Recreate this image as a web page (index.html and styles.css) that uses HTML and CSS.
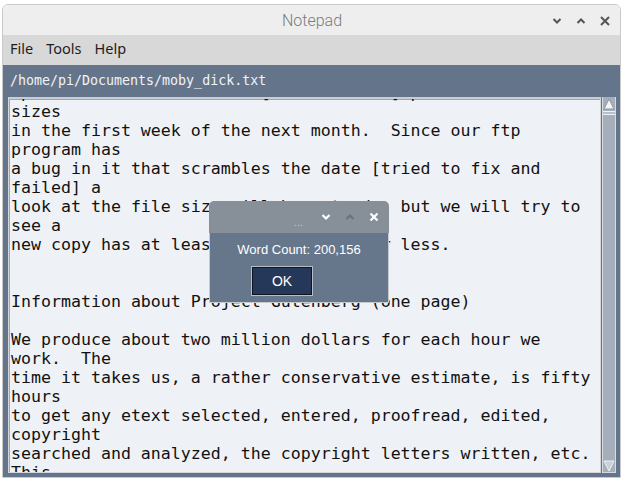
FILE: index.html
```html
<!DOCTYPE html>
<html>
<head>
<meta charset="utf-8">
<link rel="stylesheet" href="styles.css">
</head>
<body>
<div class="window">
  <div class="titlebar">
    <span></span>
    <span class="title">Notepad</span>
    <div class="controls">
      <svg width="10" height="10" viewBox="0 0 10 10"><polyline points="1.5,3 5,6.5 8.5,3" fill="none" stroke="#555" stroke-width="2"/></svg>
      <svg width="10" height="10" viewBox="0 0 10 10"><polyline points="1.5,7 5,3.5 8.5,7" fill="none" stroke="#555" stroke-width="2"/></svg>
      <svg width="10" height="10" viewBox="0 0 10 10"><path d="M1,1 L9,9 M9,1 L1,9" fill="none" stroke="#555" stroke-width="2"/></svg>
    </div>
  </div>
  <div class="menubar">
    <span>File</span><span>Tools</span><span>Help</span>
  </div>
  <div class="main">
    <div class="path">/home/pi/Documents/moby_dick.txt</div>
    <div class="editor">
      <div class="text"><pre>up to date first edition [xxxxx10x.xxx] please check file
sizes
in the first week of the next month.  Since our ftp
program has
a bug in it that scrambles the date [tried to fix and
failed] a
look at the file size will have to do, but we will try to
see a
new copy has at least one byte more or less.


Information about Project Gutenberg (one page)

We produce about two million dollars for each hour we
work.  The
time it takes us, a rather conservative estimate, is fifty
hours
to get any etext selected, entered, proofread, edited,
copyright
searched and analyzed, the copyright letters written, etc.
This
</pre></div>
      <div class="scrollbar">
        <svg class="arrow" width="12" height="12" viewBox="0 0 12 12"><polygon points="6,1 11,11 1,11" fill="#f2f4f7" stroke="#8d97a3" stroke-width="1"/></svg>
        <div class="thumb"></div>
        <div class="trough"></div>
        <svg class="arrow" width="12" height="12" viewBox="0 0 12 12"><polygon points="1,1 11,1 6,11" fill="#c9d0d8" stroke="#eef1f5" stroke-width="1"/></svg>
      </div>
    </div>
  </div>
</div>

<div class="dialog">
  <div class="dlg-title">
    <span class="dots">...</span>
    <svg width="10" height="10" viewBox="0 0 10 10"><polyline points="1.5,3 5,6.5 8.5,3" fill="none" stroke="#ffffff" stroke-width="2.2"/></svg>
    <svg width="10" height="10" viewBox="0 0 10 10"><polyline points="1.5,7 5,3.5 8.5,7" fill="none" stroke="#6a727d" stroke-width="2.2"/></svg>
    <svg width="10" height="10" viewBox="0 0 10 10"><path d="M1.5,1.5 L8.5,8.5 M8.5,1.5 L1.5,8.5" fill="none" stroke="#ffffff" stroke-width="2.2"/></svg>
  </div>
  <div class="dlg-body">
    <div class="msg">Word Count: 200,156</div>
    <button class="ok">OK</button>
  </div>
</div>
</body>
</html>
```

FILE: styles.css
```css
html, body {
  margin: 0;
  padding: 0;
  background: #ffffff;
}
body {
  padding: 4px 0 0 2px;
  width: 628px;
  height: 483px;
  box-sizing: border-box;
  overflow: hidden;
  position: relative;
}
.window {
  width: 619px;
  box-sizing: border-box;
  border: 1px solid #c9c9c9;
  border-radius: 6px 6px 0 0;
  overflow: hidden;
  display: flex;
  flex-direction: column;
}
.titlebar {
  height: 30px;
  background: #eeeeee;
  display: grid;
  grid-template-columns: 1fr auto 1fr;
  align-items: center;
}
.title {
  font-family: Roboto, "Noto Sans", sans-serif;
  font-size: 16px;
  color: #7b7b7b;
  font-weight: 300;
  padding-left: 1px;
}
.controls {
  display: flex;
  justify-content: flex-end;
  gap: 14px;
  padding-right: 10px;
  padding-top: 1px;
}
.controls svg { display: block; }
.menubar {
  height: 30px;
  box-sizing: border-box;
  padding-bottom: 4px;
  background: #d8d8d8;
  display: flex;
  align-items: center;
  gap: 13px;
  padding-left: 7px;
  font-family: "Noto Sans", sans-serif;
  font-size: 14.5px;
  color: #1e1e1e;
}
.main {
  background: #64758b;
  padding: 0 4px 4px 5px;
  display: flex;
  flex-direction: column;
}
.path {
  height: 32px;
  box-sizing: border-box;
  padding-bottom: 1px;
  display: flex;
  align-items: center;
  padding-left: 2px;
  font-family: "DejaVu Sans Mono", monospace;
  font-size: 13.3px;
  color: #f1f3f5;
}
.editor {
  height: 376px;
  display: flex;
}
.text {
  width: 594px;
  box-sizing: border-box;
  border: 1px solid #d3d7dc;
  border-top: 2px solid #c9ced5;
  box-shadow: inset 1px 1px 0 #9ea6b0;
  background: #eef1f6;
  overflow: hidden;
  padding-left: 2px;
}
.text pre {
  margin: -16px 0 0 0;
  font-family: "DejaVu Sans Mono", monospace;
  font-size: 16.6px;
  line-height: 19px;
  color: #111111;
}
.scrollbar {
  width: 14px;
  margin-left: 1px;
  box-sizing: border-box;
  background: #a5afbc;
  border-left: 1px solid #d6dbe1;
  border-right: 1px solid #d6dbe1;
  border-bottom: 1px solid #d6dbe1;
  display: flex;
  flex-direction: column;
  align-items: center;
  padding-top: 1px;
}
.scrollbar .arrow { display: block; flex: none; }
.thumb {
  width: 12px;
  height: 4px;
  margin-top: 1px;
  box-sizing: border-box;
  border-top: 1px solid #eef1f5;
  border-bottom: 1px solid #eef1f5;
  background: #b6bfca;
}
.trough { flex: 1; }

.dialog {
  position: absolute;
  left: 209px;
  top: 201px;
  width: 180px;
}
.dlg-title {
  height: 32px;
  background: #878f99;
  border-radius: 5px 5px 0 0;
  display: flex;
  align-items: center;
  justify-content: flex-end;
  gap: 14px;
  padding-right: 10px;
}
.dlg-title svg { display: block; }
.dots {
  font-family: "Liberation Sans", sans-serif;
  font-size: 11px;
  color: #c3c8ce;
  padding-top: 9px;
  margin-right: 4px;
}
.dlg-body {
  height: 70px;
  box-sizing: border-box;
  background: #66768b;
  border: 1px solid #c6c9ce;
  border-top: none;
  padding-top: 9px;
}
.msg {
  text-align: center;
  font-family: "Liberation Sans", sans-serif;
  font-size: 13px;
  line-height: 16px;
  color: #ffffff;
}
.ok {
  display: block;
  margin: 8px 0 0 41px;
  width: 62px;
  height: 30px;
  background: #263859;
  border: 1px solid #b9bec6;
  box-shadow: inset 0 0 0 1px #0f1420;
  color: #ffffff;
  font-family: "Liberation Sans", sans-serif;
  font-size: 14px;
  padding: 0;
}
```
